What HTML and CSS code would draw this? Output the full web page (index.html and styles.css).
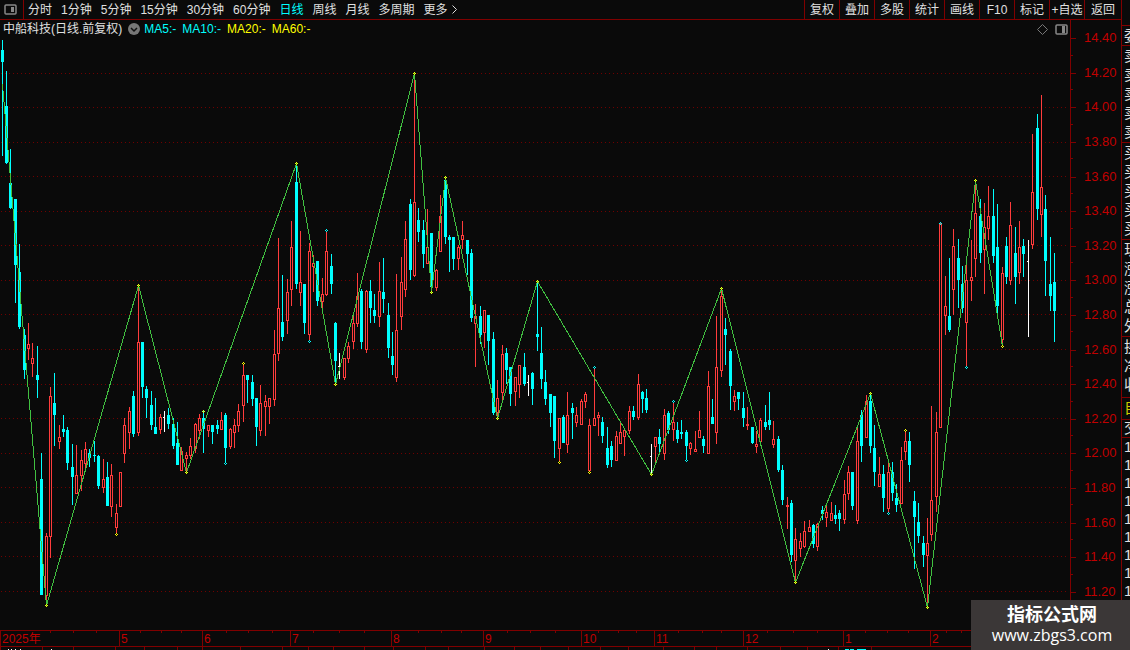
FILE: index.html
```
<!DOCTYPE html>
<html lang="zh-CN">
<head>
  <meta charset="UTF-8" />
  <meta name="viewport" content="width=device-width, initial-scale=1.0"/>
  <title>中船科技 日线</title>
  <link rel="stylesheet" href="styles.css">
</head>
<body>
  <main class="main">
    <header class="toolbar">
      <button class="layout-btn" aria-label="布局">
        <svg width="13" height="11" viewBox="0 0 13 11"><rect x="1" y="1" width="11" height="9" rx="1" fill="none" stroke="#888" stroke-width="1.5"/><rect x="7" y="3" width="3" height="5" fill="#888"/></svg>
      </button>
      <nav class="periods">
        <a href="#">分时</a>
        <a href="#">1分钟</a>
        <a href="#">5分钟</a>
        <a href="#">15分钟</a>
        <a href="#">30分钟</a>
        <a href="#">60分钟</a>
        <a href="#" class="active">日线</a>
        <a href="#">周线</a>
        <a href="#">月线</a>
        <a href="#">多周期</a>
        <a href="#" class="more">更多<svg width="5" height="9" viewBox="0 0 5 9"><path d="M.5 .5l4 4-4 4" fill="none" stroke="#ddd"/></svg></a>
      </nav>
      <div class="tools">
        <button>复权</button>
        <button>叠加</button>
        <button>多股</button>
        <button>统计</button>
        <button>画线</button>
        <button>F10</button>
        <button>标记</button>
        <button>+自选</button>
        <button>返回</button>
      </div>
    </header>

    <section class="chart">
      <div class="plot">
        <svg id="kline" viewBox="0 20 1070 610" preserveAspectRatio="none"></svg>
        <div class="legend">
          <span class="name">中船科技(日线.前复权)</span>
          <svg class="drop" width="12" height="12" viewBox="0 0 12 12"><circle cx="6" cy="6" r="6" fill="#777"/><path d="M3 5l3 3 3-3" fill="none" stroke="#111" stroke-width="1.5"/></svg>
          <span class="ma">MA5:-</span>
          <span class="ma">MA10:-</span>
          <span class="ma yellow">MA20:-</span>
          <span class="ma yellow">MA60:-</span>
        </div>
        <div class="corner">
          <svg width="11" height="11" viewBox="0 0 11 11"><path d="M5.5 .5l5 5-5 5-5-5z" fill="none" stroke="#777"/></svg>
          <svg width="13" height="11" viewBox="0 0 13 11"><rect x="1" y="1" width="11" height="9" rx="1" fill="none" stroke="#888" stroke-width="1.5"/><rect x="7" y="2" width="3" height="7" fill="#888"/></svg>
        </div>
      </div>
      <ul class="prices"></ul>
    </section>

    <div class="months">
      <span>2025年</span><span>5</span><span>6</span><span>7</span><span>8</span><span>9</span><span>10</span><span>11</span><span>12</span><span>1</span><span>2</span>
      <svg id="ticks" viewBox="0 0 1121 3" preserveAspectRatio="none"></svg>
    </div>
    <div class="tabs">
      <svg id="tabs" viewBox="0 0 1121 3" preserveAspectRatio="none"></svg>
    </div>
  </main>

  <aside class="quote">
    <ul class="group head"><li>委</li></ul>
    <ul class="group"><li>卖</li><li>卖</li><li>卖</li><li>卖</li><li>卖</li></ul>
    <ul class="group"><li>买</li><li>买</li><li>买</li><li>买</li><li>买</li></ul>
    <ul class="group"><li>现</li><li>涨</li><li>涨</li><li>总</li><li>外</li></ul>
    <ul class="group rest"><li>换</li><li>净</li><li>收</li></ul>
    <ul class="group self"><li>自</li></ul>
    <ul class="group deal"><li>交</li></ul>
    <ul class="group times"><li>1</li><li>1</li><li>1</li><li>1</li><li>1</li><li>1</li><li>1</li><li>1</li><li>1</li></ul>
  </aside>

  <div class="watermark">
    <strong>指标公式网</strong>
    <span>www.zbgs3.com</span>
  </div>

  <script src="chart.js"></script>
</body>
</html>
```

FILE: styles.css
```
* {
  margin: 0;
  padding: 0;
  box-sizing: border-box;
}

body {
  display: flex;
  height: 100vh;
  overflow: hidden;
  background: #0a0a0a;
  color: #e0e0e0;
  font-family: "Liberation Sans", "Noto Sans CJK SC", sans-serif;
  font-size: 12px;
  line-height: 18px;
}

ul {
  list-style: none;
}

a {
  color: inherit;
  text-decoration: none;
}

button {
  background: none;
  border: 0;
  color: inherit;
  font: inherit;
  cursor: pointer;
}

svg {
  display: block;
}

.main {
  flex: 1;
  min-width: 0;
  display: flex;
  flex-direction: column;
}

/* toolbar */
.toolbar {
  display: flex;
  height: 20px;
  border-bottom: 1px solid #800000;
  line-height: 20px;
  white-space: nowrap;
}

.layout-btn {
  width: 24px;
  padding-left: 4px;
  border-right: 1px solid #800000;
}

.periods {
  display: flex;
  gap: 9px;
  padding-left: 4px;
}

.periods .active {
  color: #00ffff;
}

.periods .more {
  display: flex;
  align-items: center;
  gap: 4px;
}

.tools {
  display: flex;
  margin-left: auto;
}

.tools button {
  width: 35px;
  border-left: 1px solid #800000;
}

.tools button:last-child {
  width: 37px;
}

/* chart */
.chart {
  flex: 1;
  min-height: 0;
  display: flex;
}

.plot {
  flex: 1;
  min-width: 0;
  position: relative;
}

#kline {
  width: 100%;
  height: 100%;
  shape-rendering: crispEdges;
}

.legend {
  position: absolute;
  top: 0;
  left: 3px;
  display: flex;
  align-items: center;
  white-space: nowrap;
}

.legend .drop {
  margin: 0 4px 0 6px;
}

.legend .ma {
  color: #00ffff;
  margin-right: 6px;
}

.legend .yellow {
  color: #ffff00;
}

.corner {
  position: absolute;
  top: 4px;
  right: 2px;
  display: flex;
  gap: 7px;
}

.prices {
  width: 51px;
  display: flex;
  flex-direction: column;
  padding: 1px 0 21px;
  border-left: 1px solid #800000;
  color: #c00000;
  font-size: 13px;
}

.prices li {
  flex: 1;
  display: flex;
  align-items: center;
  padding-left: 13px;
  position: relative;
}

.prices li::before,
.prices li::after {
  content: "";
  position: absolute;
  left: 0;
  height: 1px;
  background: #800000;
}

.prices li::before {
  top: 50%;
  width: 5px;
}

.prices li::after {
  bottom: 0;
  width: 2px;
}

/* time axis */
.months {
  position: relative;
  display: grid;
  grid-template-columns: 119fr 83fr 88fr 101fr 92fr 98fr 73fr 89fr 100fr 87fr 191fr;
  height: 16px;
  border-top: 1px solid #800000;
  color: #c00000;
  line-height: 16px;
}

.months span {
  border-left: 1px solid #800000;
  padding-left: 1px;
}

#ticks {
  position: absolute;
  top: 0;
  left: 0;
  width: 100%;
  height: 3px;
}

.tabs {
  height: 4px;
  border-top: 1px solid #800000;
}

#tabs {
  width: 100%;
  height: 3px;
  shape-rendering: crispEdges;
}

/* quote panel */
.quote {
  width: 9px;
  overflow: hidden;
  padding-top: 25px;
  border-left: 1px solid #800000;
  font-size: 15px;
}

.group {
  border-top: 1px solid #800000;
  padding-left: 2px;
}

.group li {
  width: 16px;
  height: 19px;
  line-height: 19px;
}

.group + .group {
  padding-bottom: 1px;
}

.group + .rest {
  padding-bottom: 3px;
}

.group.self li {
  color: #cccc00;
  height: 20px;
}

.group.deal li {
  height: 16px;
  line-height: 16px;
}

.group.times li {
  height: 18px;
  line-height: 18px;
}

/* watermark */
.watermark {
  position: absolute;
  right: 0;
  bottom: 0;
  width: 159px;
  height: 50px;
  padding: 5px 0 0 3px;
  background: #3b3737;
  color: #fff;
  text-align: center;
}

.watermark strong,
.watermark span {
  display: block;
  line-height: 20px;
}

.watermark strong {
  font-size: 18px;
}

.watermark span {
  font-family: "Open Sans", sans-serif;
  font-size: 16px;
}
```

FILE: chart.js
```
// color, x, high, body top, body bottom, low
const candles = `
c 2 40 50 62 156|c 6 71 106 163 164|c 10 149 183 208 209|c 15 199 199 265 303|c 19 244 272 327 329
c 24 329 335 370 379|r 28 323 344 349 360|r 32 343 358 364 377|c 37 346 375 380 398|c 41 453 479 595 595
r 46 533 536 596 605|r 50 387 396 537 558|c 54 373 403 415 446|r 59 425 437 442 449|c 63 415 429 432 437
c 67 427 430 463 470|c 72 444 467 477 505|r 76 445 475 494 494|r 81 450 460 476 491|r 85 442 449 464 472
c 89 449 453 458 467|c 94 441 455 456 462|c 98 455 456 486 489|r 103 459 479 488 493|c 107 462 477 506 506
r 111 464 475 507 517|r 116 504 513 528 534|r 120 472 472 507 507|r 124 418 425 454 463|r 129 407 411 433 449
c 133 391 396 434 437|r 138 285 342 433 436|c 142 342 342 387 398|c 146 386 389 398 418|c 151 391 405 425 430
c 155 398 427 434 434|r 160 414 417 430 434|w 164 411 417 418 432|c 168 408 415 424 429|c 173 418 424 446 449
c 177 422 443 465 465|r 181 447 451 471 471|r 186 452 455 459 472|r 190 438 446 456 459|r 195 423 424 449 453
r 199 414 418 431 439|c 203 411 418 429 453|r 208 425 425 431 437|c 212 425 425 432 444|c 217 420 425 429 434
r 221 412 420 430 430|c 225 413 415 448 463|r 230 428 429 447 449|r 234 419 425 433 448|r 238 404 411 426 432
r 243 364 375 406 422|c 247 375 375 380 403|c 252 375 382 399 406|c 256 398 398 427 446|r 260 385 403 431 436
r 265 395 401 407 436|r 269 398 398 407 424|r 274 330 354 400 406|r 278 238 308 354 361|c 282 275 322 337 341
r 287 279 292 321 334|r 291 221 247 290 306|c 296 163 182 284 289|r 300 231 282 293 306|c 304 284 284 323 334
r 309 243 251 335 341|r 313 255 263 267 292|c 317 261 261 301 306|r 322 278 294 302 308|r 326 231 251 295 296
c 331 254 266 284 294|c 335 322 323 361 384|w 339 353 366 367 379|r 344 358 358 378 380|r 348 342 346 359 363
r 353 313 323 342 349|r 357 273 296 324 327|c 361 289 291 342 349|r 366 290 291 350 353|c 370 280 291 308 323
c 374 294 310 316 323|r 379 262 291 317 327|c 383 258 292 299 313|c 388 303 315 348 358|c 392 332 356 365 375
r 396 274 330 378 382|r 401 257 282 317 330|r 405 221 239 290 297|c 410 199 204 270 280|r 414 73 202 276 277
c 418 208 220 232 242|c 423 220 230 254 268|r 427 209 247 264 264|c 431 233 233 287 292|r 436 269 270 288 291
r 440 195 216 252 252|c 445 177 180 237 244|c 449 235 237 240 272|c 453 237 237 259 270|r 458 245 247 259 270
r 462 221 235 240 249|c 467 240 240 254 275|c 471 249 253 318 322|r 475 304 316 324 367|c 480 306 316 335 344
r 484 310 310 333 348|c 488 315 315 341 365|c 493 332 339 413 415|r 497 380 398 413 418|r 502 345 354 393 402
c 506 348 353 370 384|c 510 367 367 394 406|r 515 377 377 392 406|r 519 365 365 385 398|c 524 353 367 384 386
w 528 375 382 383 396|c 532 372 373 389 405|c 537 281 334 337 351|c 541 327 353 379 389|c 545 370 382 399 405
c 550 394 394 413 427|c 554 396 396 441 458|r 559 418 418 449 461|c 563 415 417 443 443|r 567 392 415 445 453
c 572 403 408 413 439|r 576 407 415 423 427|r 581 399 401 425 425|r 585 392 394 402 408|r 589 419 425 471 472
r 594 368 418 426 426|r 598 412 415 418 436|c 602 417 422 436 443|c 607 427 448 465 468|c 611 441 446 460 467
r 616 431 436 461 461|r 620 423 432 444 444|r 624 429 430 437 456|r 629 406 411 431 434|c 633 406 411 417 420
r 638 374 384 418 420|c 642 391 392 399 413|c 646 389 398 410 413|w 651 444 456 457 473|r 655 437 437 447 465
c 659 429 437 444 455|r 664 409 415 454 460|c 668 411 413 430 434|r 673 402 422 430 441|c 677 422 430 439 443
c 681 420 432 434 439|c 686 430 432 446 460|r 690 442 443 449 455|r 695 431 449 452 452|r 699 411 430 438 438
c 703 436 439 446 453|r 708 371 386 454 454|c 712 399 417 424 424|r 716 316 367 433 444|r 721 288 296 371 377
c 725 318 329 335 365|c 730 349 351 386 410|r 734 390 396 402 411|c 738 392 392 399 410|c 743 392 408 418 427
r 747 407 424 426 430|c 752 427 427 443 444|r 756 431 444 447 453|r 760 418 420 442 442|c 765 405 422 427 430
c 769 392 420 425 430|r 773 421 439 445 448|c 778 436 439 470 472|c 782 465 470 500 505|r 787 497 505 507 529
c 791 500 503 555 562|r 795 528 539 561 582|r 800 533 541 549 557|r 804 521 531 547 548|r 809 520 527 532 532
c 813 524 525 544 548|r 817 523 524 547 551|c 822 506 510 514 520|r 826 504 512 518 527|r 831 502 513 521 521
c 835 505 515 519 524|c 839 510 513 519 531|r 844 480 494 520 524|r 848 466 472 494 500|c 852 472 472 506 510
r 857 425 441 521 524|c 861 410 415 446 462|r 866 395 401 438 438|c 870 393 401 446 453|c 874 425 448 472 486
r 879 457 474 487 487|c 883 465 474 498 512|r 888 461 472 509 512|c 892 462 472 493 501|c 896 484 498 505 512
r 901 447 460 504 504|r 905 431 441 452 460|c 909 432 441 465 482|c 914 491 501 517 569|c 918 503 522 536 543
c 923 536 543 555 567|r 927 518 543 556 607|r 931 406 500 535 541|r 936 412 432 497 512|r 940 223 223 428 428
r 945 276 306 316 335|c 949 258 316 330 332|r 953 229 246 290 315|c 958 239 258 280 308|c 962 266 284 308 313
r 966 263 280 323 366|r 971 240 277 281 301|r 975 180 213 259 277|c 980 199 216 253 263|r 984 203 227 250 294
r 988 186 216 229 240|c 993 189 216 256 263|c 997 204 247 306 315|r 1002 267 273 340 346|c 1006 237 246 277 284
r 1010 202 225 281 285|c 1015 227 253 277 304|r 1019 221 247 273 284|c 1023 239 246 254 277|w 1028 240 261 262 337
r 1032 134 192 245 249|c 1037 114 128 209 220|r 1041 95 187 215 237|c 1045 195 209 261 296|c 1050 237 284 296 311
c 1054 253 282 311 342`.trim().split(/[|\n]/).map(s => s.split(" "));

const pivots = [
  [2, 84], [46, 605], [138, 285], [186, 472], [296, 163], [335, 384], [414, 73], [431, 292], [445, 177],
  [497, 418], [537, 281], [651, 474], [721, 288], [795, 582], [870, 393], [927, 607], [975, 180], [1002, 346],
];
const yellowMarks = [[116, 534], [203, 411], [243, 363], [559, 462], [589, 472], [905, 430], ...pivots.slice(1)];
const cyanMarks = [[225, 463], [309, 341], [326, 230], [594, 367], [673, 401], [686, 460], [888, 513], [940, 223], [966, 367]];

const colors = { c: "#00ffff", r: "#ff3c3c", w: "#ffffff" };

function rect(x, y, w, h, fill) {
  return `<rect x="${x}" y="${y}" width="${w}" height="${h}" fill="${fill}"/>`;
}

function drawCandle([type, ...nums]) {
  const [x, high, top, bottom, low] = nums.map(Number);
  const color = colors[type];
  if (type === "r") {
    return rect(x, high, 1, top - high, color) +
      rect(x, bottom, 1, low - bottom, color) +
      `<rect x="${x - 0.5}" y="${top + 0.5}" width="2" height="${bottom - top - 1}" fill="none" stroke="${color}"/>`;
  }
  const body = type === "w" ? rect(x - 1, top, 1, 1, color) : rect(x - 1, top, 3, bottom - top, color);
  return rect(x, high, 1, low - high, color) + body;
}

function drawMark([x, y], color) {
  return rect(x - 1, y, 1, 1, color) + rect(x + 1, y, 1, 1, color) +
    rect(x, y - 1, 1, 1, color) + rect(x, y + 1, 1, 1, color);
}

function renderChart() {
  let svg = "";
  for (let i = 1; i < 17; i++) {
    const y = Math.floor(38.5 + i * 34.56) + 0.5;
    svg += `<path d="M1 ${y}H1067" stroke="#700000" stroke-dasharray="1 3"/>`;
  }
  svg += candles.map(drawCandle).join("");
  const points = pivots.map(([x, y]) => `${x + 0.5},${y + 0.5}`).join(" ");
  svg += `<polyline points="${points}" fill="none" stroke="#40c040"/>`;
  svg += yellowMarks.map(m => drawMark(m, "#ffff00")).join("");
  svg += cyanMarks.map(m => drawMark(m, "#00ffff")).join("");
  document.querySelector("#kline").innerHTML = svg;
}

function renderPrices() {
  let html = "";
  for (let p = 1440; p >= 1120; p -= 20) {
    html += `<li>${(p / 100).toFixed(2)}</li>`;
  }
  document.querySelector(".prices").innerHTML = html;
}

function renderTicks() {
  const weeks = [50, 73, 96, 140, 161, 181, 226, 248, 272, 313, 339, 364, 418, 441, 461, 507, 530, 555,
    598, 618, 636, 678, 702, 721, 767, 793, 817, 865, 887, 908, 946, 961];
  const tabs = [0, 42, 73, 115, 144, 177, 202, 240, 282, 308, 333, 364, 393, 425, 448, 484, 514, 540,
    568, 600, 628, 663, 694, 716, 747, 780, 807, 838, 871];
  document.querySelector("#ticks").innerHTML = weeks.map(x => rect(x, 0, 1, 2, "#800000")).join("");
  // only the top edge of the tab captions shows in this strip
  document.querySelector("#tabs").innerHTML = tabs.map(x => rect(x, 0, 1, 3, "#800000")).join("") +
    [8, 11, 15, 20, 51, 828].map(x => rect(x, 2, 1, 1, "#ffffff")).join("") +
    rect(845, 2, 4, 1, "#00ffff") + rect(850, 2, 4, 1, "#00ffff") + rect(857, 2, 9, 1, "#00ffff");
}

renderChart();
renderPrices();
renderTicks();
```
